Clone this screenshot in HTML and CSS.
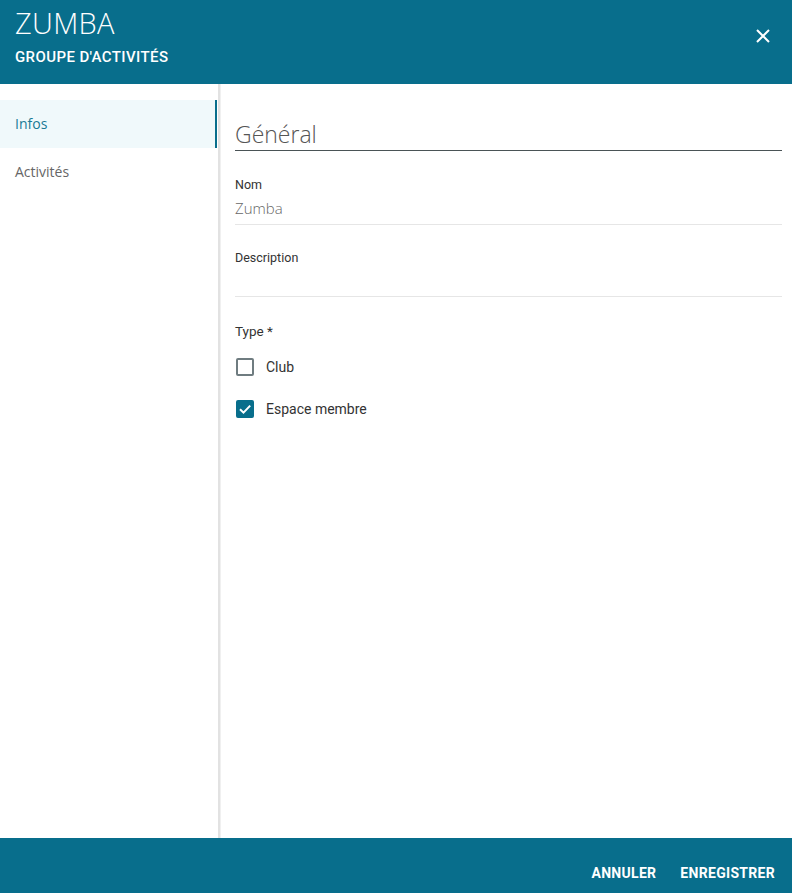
FILE: index.html
```html
<!DOCTYPE html>
<html lang="fr">
<head>
    <meta charset="UTF-8">
    <meta name="viewport" content="width=device-width, initial-scale=1.0">
    <title>Zumba - Groupe d'activités</title>
    <link rel="stylesheet" href="styles.css">
</head>
<body>
<div class="dialog">
    <header class="dialog-header">
        <div class="titles">
            <h1>ZUMBA</h1>
            <h2>GROUPE D'ACTIVITÉS</h2>
        </div>
        <button class="close-btn" aria-label="Fermer">
            <svg width="14" height="14" viewBox="0 0 14 14">
                <path d="M1 1 L13 13 M13 1 L1 13" stroke="#fff" stroke-width="2" fill="none"/>
            </svg>
        </button>
    </header>

    <div class="dialog-body">
        <nav class="sidebar">
            <a class="nav-item active" href="#">Infos</a>
            <a class="nav-item" href="#">Activités</a>
        </nav>

        <main class="content">
            <h3 class="section-title">Général</h3>

            <div class="field field-name">
                <label>Nom</label>
                <div class="value">Zumba</div>
            </div>

            <div class="field">
                <label>Description</label>
                <div class="value"></div>
            </div>

            <div class="type-group">
                <div class="type-label">Type *</div>
                <div class="check-row">
                    <span class="checkbox"></span>
                    <span>Club</span>
                </div>
                <div class="check-row">
                    <span class="checkbox checked">
                        <svg width="14" height="14" viewBox="0 0 14 14">
                            <path d="M2 7.2 L5.5 10.6 L12.2 3.6" stroke="#fff" stroke-width="2" fill="none"/>
                        </svg>
                    </span>
                    <span>Espace membre</span>
                </div>
            </div>
        </main>
    </div>

    <footer class="dialog-footer">
        <button class="text-btn">ANNULER</button>
        <button class="text-btn">ENREGISTRER</button>
    </footer>
</div>
</body>
</html>
```

FILE: styles.css
```css
body {
    margin: 0;
    padding: 0;
    font-family: Roboto, "Liberation Sans", sans-serif;
    color: #222;
    background: #fff;
}

.dialog {
    display: flex;
    flex-direction: column;
    height: 100vh;
}

.dialog-header {
    background-color: #086e8c;
    color: #fff;
    height: 84px;
    box-sizing: border-box;
    padding: 5px 15px 0 15px;
    display: flex;
    justify-content: space-between;
    align-items: flex-start;
}

.dialog-header h1 {
    margin: 0;
    font-family: "Open Sans", sans-serif;
    font-weight: 300;
    font-size: 29px;
    line-height: 36px;
    letter-spacing: 0.3px;
}

.dialog-header h2 {
    margin: 8px 0 0 0;
    font-size: 15px;
    font-weight: 500;
    line-height: 16px;
    letter-spacing: 0.4px;
}

.close-btn {
    background: none;
    border: none;
    padding: 0;
    margin: 24px 7px 0 0;
    cursor: pointer;
    line-height: 0;
}

.dialog-body {
    flex: 1;
    display: flex;
    min-height: 0;
}

.sidebar {
    width: 218px;
    padding-top: 16px;
    border-right: 2px solid #e2e2e2;
    box-shadow: 1px 0 0 #f0f0f0;
    display: flex;
    flex-direction: column;
}

.nav-item {
    display: block;
    height: 48px;
    line-height: 48px;
    padding-left: 15px;
    font-family: "Open Sans", sans-serif;
    font-size: 14px;
    color: #666;
    text-decoration: none;
}

.nav-item.active {
    background-color: #f0f9fb;
    color: #1a7a96;
    border-right: 2px solid #086e8c;
    margin-right: 1px;
}

.content {
    flex: 1;
    padding: 33px 10px 0 15px;
}

.section-title {
    margin: 0;
    font-family: "Open Sans", sans-serif;
    font-weight: 300;
    font-size: 23px;
    color: #555;
    line-height: 32px;
    padding-top: 1px;
    border-bottom: 1px solid #4a5356;
}

.field {
    border-bottom: 1px solid #e6e6e6;
    padding-top: 25px;
    height: 46px;
}

.field-name {
    padding-top: 26px;
    height: 47px;
}

.field label {
    display: block;
    font-size: 12.5px;
    line-height: 16px;
    color: #333;
}

.field .value {
    margin-top: 5px;
    font-family: "Open Sans", sans-serif;
    font-weight: 300;
    font-size: 15px;
    line-height: 20px;
    color: #666;
}

.type-group {
    padding-top: 26px;
}

.type-label {
    font-size: 13.5px;
    line-height: 16px;
    color: #333;
    margin-bottom: 18px;
}

.check-row {
    display: flex;
    align-items: center;
    gap: 12px;
    font-size: 14px;
    color: #333;
    height: 20px;
    margin-bottom: 22px;
    padding-left: 1px;
}

.checkbox {
    width: 18px;
    height: 18px;
    box-sizing: border-box;
    border: 2px solid #6f7c80;
    border-radius: 2px;
    display: flex;
    align-items: center;
    justify-content: center;
}

.checkbox.checked {
    background-color: #086e8c;
    border-color: #086e8c;
}

.dialog-footer {
    background-color: #086e8c;
    height: 55px;
    box-sizing: border-box;
    padding-top: 14px;
    display: flex;
    justify-content: flex-end;
    align-items: center;
    padding-right: 9px;
    gap: 8px;
}

.text-btn {
    background: none;
    border: none;
    color: #fff;
    font-family: Roboto, sans-serif;
    font-weight: 700;
    font-size: 14px;
    padding: 0 8px;
    cursor: pointer;
    letter-spacing: 0.3px;
}
```
